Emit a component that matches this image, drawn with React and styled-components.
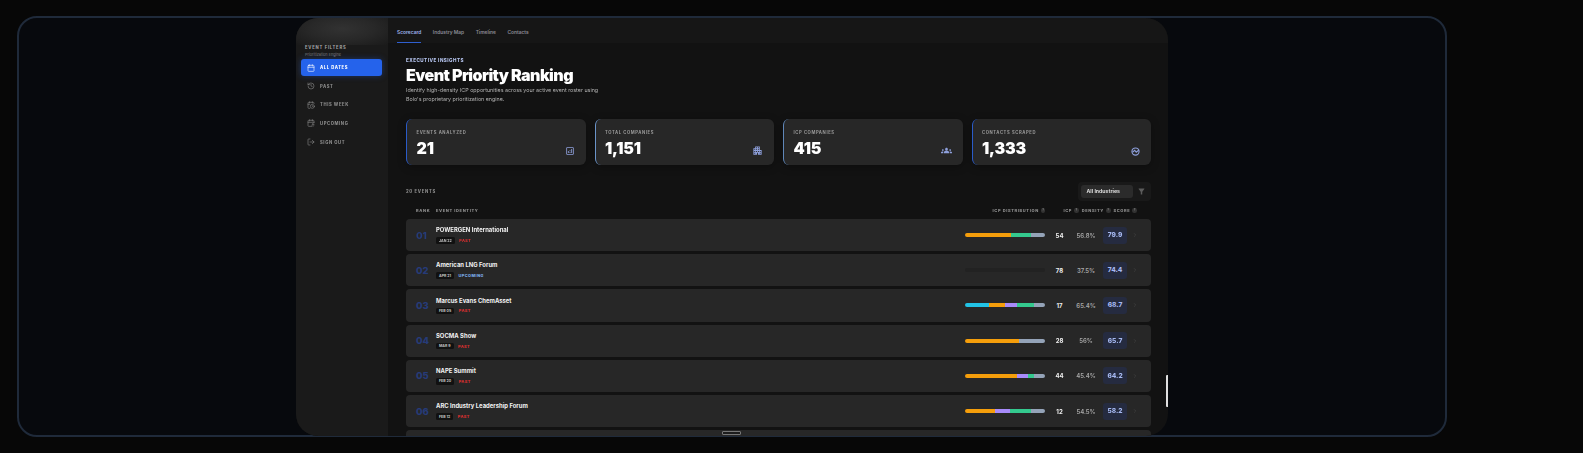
import styled, { createGlobalStyle } from "styled-components";
import {
  Calendar,
  History,
  CalendarClock,
  CalendarArrowUp,
  LogOut,
  ChevronRight,
} from "lucide-react";
import { MdOutlineAnalytics, MdApartment, MdGroups, MdFilterAlt } from "react-icons/md";

const GlobalStyle = createGlobalStyle`
  html, body {
    margin: 0;
    padding: 0;
    background: #070707;
    font-family: "Inter", "Liberation Sans", sans-serif;
  }
  * { box-sizing: border-box; }
`;

const Page = styled.div`
  width: 1583px;
  height: 453px;
  padding: 16px 0 0 17px;
  overflow: hidden;
`;

const Frame = styled.div`
  position: relative;
  width: 1430px;
  height: 421px;
  border: 2px solid #1f2a3a;
  border-radius: 20px;
  background: #07090d;
  display: flex;
  justify-content: center;
`;

const Panel = styled.div`
  width: 872px;
  height: 418px;
  border-radius: 22px;
  overflow: hidden;
  display: flex;
  background: #121212;
  filter: blur(0.4px);
`;

const Sidebar = styled.aside`
  width: 92px;
  flex-shrink: 0;
  background: #1a1a1a;
  display: flex;
  flex-direction: column;
  padding: 0 6px 0 5px;
`;

const SidebarGlow = styled.div`
  height: 27px;
  margin: 0 -6px 0 -5px;
  background: radial-gradient(ellipse at 50% 40%, #323232 0%, #282828 50%, #1a1a1a 100%);
`;

const SidebarHead = styled.div`
  padding-left: 4px;
  margin-bottom: 2px;
`;

const SidebarTitle = styled.div`
  font-size: 4.2px;
  line-height: 5px;
  font-weight: 700;
  letter-spacing: 0.75px;
  color: #a8a8a8;
`;

const SidebarSub = styled.div`
  font-size: 3.8px;
  line-height: 5px;
  margin-top: 2px;
  color: #7d7d7d;
`;

const NavItem = styled.div`
  height: ${(p) => (p.$active ? "17px" : "18.6px")};
  margin-bottom: ${(p) => (p.$active ? "1px" : "0")};
  display: flex;
  align-items: center;
  gap: 5px;
  padding-left: 6px;
  border-radius: 3px;
  background: ${(p) => (p.$active ? "#2563eb" : "transparent")};
  box-shadow: ${(p) => (p.$active ? "0 0 6px rgba(37, 99, 235, 0.35)" : "none")};
  color: ${(p) => (p.$active ? "#ffffff" : "#8a8a8a")};
  font-size: 4.2px;
  font-weight: 800;
  letter-spacing: 0.6px;
`;

const Main = styled.main`
  flex: 1;
  min-width: 0;
  display: flex;
  flex-direction: column;
  position: relative;
`;

const TabBar = styled.nav`
  height: 25px;
  flex-shrink: 0;
  display: flex;
  gap: 11.5px;
  padding-left: 9px;
  background: #161616;
`;

const Tab = styled.div`
  height: 25px;
  padding-top: 10.5px;
  font-size: 4.9px;
  line-height: 7px;
  font-weight: 600;
  color: ${(p) => (p.$active ? "#9fb4ec" : "#8b8b95")};
  border-bottom: 1.2px solid ${(p) => (p.$active ? "#2f5fd0" : "transparent")};
`;

const Content = styled.div`
  flex: 1;
  min-height: 0;
  overflow: hidden;
  padding: 15px 17px 0 18px;
`;

const Eyebrow = styled.div`
  font-size: 4.6px;
  line-height: 6px;
  font-weight: 800;
  letter-spacing: 0.45px;
  color: #b3c2ec;
`;

const Title = styled.h1`
  margin: 2.5px 0 0;
  font-size: 16px;
  line-height: 16px;
  font-weight: 900;
  letter-spacing: -0.55px;
  color: #ffffff;
`;

const Description = styled.p`
  margin: 3.8px 0 0;
  width: 200px;
  font-size: 5.35px;
  line-height: 8.7px;
  color: #b4b4b4;
`;

const Cards = styled.section`
  margin-top: 15.3px;
  display: grid;
  grid-template-columns: repeat(4, 1fr);
  gap: 9px;
`;

const Card = styled.div`
  height: 46px;
  padding: 11px 11px 9px 9.5px;
  display: flex;
  justify-content: space-between;
  align-items: flex-end;
  background: #272727;
  border-radius: 6px;
  border-left: 1.6px solid ${(p) => p.$accent};
  box-shadow: 0 2px 8px rgba(0, 0, 0, 0.3);
`;

const CardBody = styled.div`
  align-self: flex-start;
`;

const CardLabel = styled.div`
  font-size: 4.2px;
  line-height: 6px;
  font-weight: 700;
  letter-spacing: 0.6px;
  color: #9a9a9a;
`;

const CardValue = styled.div`
  margin-top: 2.6px;
  font-size: 16px;
  line-height: 18px;
  font-weight: 900;
  letter-spacing: -0.2px;
  color: #ffffff;
`;

const CardIcon = styled.span`
  display: flex;
  color: #8ea0dc;
`;

const Toolbar = styled.div`
  margin-top: 16.7px;
  display: flex;
  justify-content: space-between;
  align-items: center;
`;

const EventCount = styled.div`
  font-size: 4.2px;
  font-weight: 800;
  letter-spacing: 0.7px;
  color: #8a8a8a;
`;

const FilterBox = styled.div`
  width: 73px;
  height: 19.3px;
  padding: 3px;
  display: flex;
  align-items: center;
  gap: 4.5px;
  background: #191919;
  border-radius: 4px;
`;

const Select = styled.div`
  width: 51.5px;
  height: 13px;
  padding-left: 5.5px;
  display: flex;
  align-items: center;
  font-size: 5.2px;
  font-weight: 700;
  color: #dcdcdc;
  background: #2b2b2b;
  border-radius: 3px;
`;

const FilterIcon = styled.span`
  display: flex;
  color: #5c5c5c;
`;

const TableHead = styled.div`
  margin-top: 4.6px;
  height: 10px;
  display: flex;
  align-items: center;
  padding: 0 14px 0 10px;
  font-size: 4px;
  font-weight: 800;
  letter-spacing: 0.62px;
  color: #8f8f8f;
`;

const RankHead = styled.div`
  width: 20px;
`;

const IdentityHead = styled.div`
  flex: 1;
`;

const HeadCol = styled.div`
  display: flex;
  align-items: center;
  gap: 2px;
  margin-left: ${(p) => p.$gap}px;
`;

const Hint = styled.span`
  width: 4.6px;
  height: 4.6px;
  border-radius: 50%;
  background: #333333;
  color: #7c7c7c;
  font-size: 3px;
  line-height: 4.6px;
  letter-spacing: 0;
  text-align: center;
`;

const Rows = styled.div`
  margin-top: 3.4px;
  display: flex;
  flex-direction: column;
  gap: 3px;
`;

const Row = styled.div`
  height: 32.2px;
  flex-shrink: 0;
  padding: 0 9px 0 10px;
  display: grid;
  grid-template-columns: 20px 1fr 80px 29px 24px 5px 24px 15px;
  align-items: center;
  background: #272727;
  border-radius: 4px;
`;

const Rank = styled.div`
  font-size: 9.5px;
  font-weight: 800;
  color: #263b78;
`;

const Name = styled.div`
  font-size: 5.92px;
  line-height: 8px;
  font-weight: 700;
  color: #f2f2f2;
`;

const Meta = styled.div`
  margin-top: 3px;
  display: flex;
  align-items: center;
  gap: 4.5px;
`;

const DatePill = styled.span`
  height: 6.6px;
  padding: 0 3px;
  display: flex;
  align-items: center;
  font-size: 3.6px;
  font-weight: 700;
  color: #c4c4c4;
  background: #111111;
  border-radius: 1.5px;
`;

const Status = styled.span`
  font-size: 3.8px;
  font-weight: 800;
  letter-spacing: 0.5px;
  color: ${(p) => (p.$upcoming ? "#7fb2f0" : "#dc2f2f")};
`;

const Bar = styled.div`
  height: 4px;
  display: flex;
  overflow: hidden;
  border-radius: 2px;
  background: #222222;
`;

const Segment = styled.div`
  background: ${(p) => p.$color};
`;

const IcpCell = styled.div`
  text-align: center;
  font-size: 6px;
  font-weight: 700;
  color: #eeeeee;
`;

const DensityCell = styled.div`
  text-align: center;
  font-size: 6px;
  font-weight: 600;
  color: #a8a8a8;
`;

const ScoreChip = styled.div`
  grid-column: 7;
  height: 17px;
  display: flex;
  align-items: center;
  justify-content: center;
  font-size: 6.6px;
  font-weight: 800;
  color: #a5b8f0;
  background: #252b40;
  border-radius: 3px;
`;

const Chevron = styled.span`
  display: flex;
  justify-content: center;
  color: #4a4a4a;
`;

const Handle = styled.div`
  position: absolute;
  left: 703px;
  bottom: 0;
  width: 18.5px;
  height: 3.6px;
  background: #1c1c1c;
  border: 0.7px solid #777777;
  border-radius: 1px;
`;

const SideGrip = styled.div`
  position: absolute;
  right: 0;
  top: 357px;
  width: 2px;
  height: 32px;
  background: #e0e0e0;
  border-radius: 1px 0 0 1px;
`;

const navItems = [
  { label: "ALL DATES", Icon: Calendar, active: true },
  { label: "PAST", Icon: History },
  { label: "THIS WEEK", Icon: CalendarClock },
  { label: "UPCOMING", Icon: CalendarArrowUp },
  { label: "SIGN OUT", Icon: LogOut },
];

const ScrapedIcon = () => (
  <svg width="9" height="9" viewBox="0 0 24 24" fill="none" stroke="currentColor" strokeWidth="3">
    <circle cx="12" cy="12" r="9.5" />
    <path d="M4 14 L10 9 L14 14 L21 8" />
  </svg>
);

const stats = [
  { label: "EVENTS ANALYZED", value: "21", accent: "#2a5bc8", icon: <MdOutlineAnalytics size={10} /> },
  { label: "TOTAL COMPANIES", value: "1,151", accent: "#6a93c8", icon: <MdApartment size={11} /> },
  { label: "ICP COMPANIES", value: "415", accent: "#5f86b8", icon: <MdGroups size={11} /> },
  { label: "CONTACTS SCRAPED", value: "1,333", accent: "#2a5bc8", icon: <ScrapedIcon /> },
];

const ORANGE = "#f59e0b";
const GREEN = "#34c98e";
const GREY = "#94a3b8";
const PURPLE = "#a78bfa";
const CYAN = "#22c3e6";

const events = [
  { name: "POWERGEN International", date: "JAN 22", status: "PAST", icp: 54, density: "56.8%", score: "79.9", bar: [[ORANGE, 58], [GREEN, 25], [GREY, 17]] },
  { name: "American LNG Forum", date: "APR 21", status: "UPCOMING", icp: 78, density: "37.5%", score: "74.4", bar: [] },
  { name: "Marcus Evans ChemAsset", date: "FEB 05", status: "PAST", icp: 17, density: "65.4%", score: "68.7", bar: [[CYAN, 30], [ORANGE, 20], [PURPLE, 15], [GREEN, 21], [GREY, 14]] },
  { name: "SOCMA Show", date: "MAR 9", status: "PAST", icp: 28, density: "56%", score: "65.7", bar: [[ORANGE, 67.5], [GREY, 32.5]] },
  { name: "NAPE Summit", date: "FEB 20", status: "PAST", icp: 44, density: "45.4%", score: "64.2", bar: [[ORANGE, 64.5], [PURPLE, 14.5], [GREEN, 7], [GREY, 14]] },
  { name: "ARC Industry Leadership Forum", date: "FEB 12", status: "PAST", icp: 12, density: "54.5%", score: "58.2", bar: [[ORANGE, 37.5], [PURPLE, 19], [GREEN, 25.5], [GREY, 18]] },
];

const App = () => {
  return (
    <>
      <GlobalStyle />
      <Page>
        <Frame>
          <Panel>
            <Sidebar>
              <SidebarGlow />
              <SidebarHead>
                <SidebarTitle>EVENT FILTERS</SidebarTitle>
                <SidebarSub>Prioritization Engine</SidebarSub>
              </SidebarHead>
              {navItems.map(({ label, Icon, active }) => (
                <NavItem key={label} $active={active}>
                  <Icon size={8} strokeWidth={1.8} />
                  {label}
                </NavItem>
              ))}
            </Sidebar>
            <Main>
              <TabBar>
                <Tab $active>Scorecard</Tab>
                <Tab>Industry Map</Tab>
                <Tab>Timeline</Tab>
                <Tab>Contacts</Tab>
              </TabBar>
              <Content>
                <Eyebrow>EXECUTIVE INSIGHTS</Eyebrow>
                <Title>Event Priority Ranking</Title>
                <Description>
                  Identify high-density ICP opportunities across your active event roster using
                  Bolo's proprietary prioritization engine.
                </Description>
                <Cards>
                  {stats.map((stat) => (
                    <Card key={stat.label} $accent={stat.accent}>
                      <CardBody>
                        <CardLabel>{stat.label}</CardLabel>
                        <CardValue>{stat.value}</CardValue>
                      </CardBody>
                      <CardIcon>{stat.icon}</CardIcon>
                    </Card>
                  ))}
                </Cards>
                <Toolbar>
                  <EventCount>20 EVENTS</EventCount>
                  <FilterBox>
                    <Select>All Industries</Select>
                    <FilterIcon>
                      <MdFilterAlt size={9} />
                    </FilterIcon>
                  </FilterBox>
                </Toolbar>
                <TableHead>
                  <RankHead>RANK</RankHead>
                  <IdentityHead>EVENT IDENTITY</IdentityHead>
                  <HeadCol $gap={0}>ICP DISTRIBUTION <Hint>?</Hint></HeadCol>
                  <HeadCol $gap={18}>ICP <Hint>?</Hint></HeadCol>
                  <HeadCol $gap={3}>DENSITY <Hint>?</Hint></HeadCol>
                  <HeadCol $gap={3}>SCORE <Hint>?</Hint></HeadCol>
                </TableHead>
                <Rows>
                  {events.map((event, index) => (
                    <Row key={event.name}>
                      <Rank>{String(index + 1).padStart(2, "0")}</Rank>
                      <div>
                        <Name>{event.name}</Name>
                        <Meta>
                          <DatePill>{event.date}</DatePill>
                          <Status $upcoming={event.status === "UPCOMING"}>{event.status}</Status>
                        </Meta>
                      </div>
                      <Bar>
                        {event.bar.map(([color, pct]) => (
                          <Segment key={color} $color={color} style={{ width: `${pct}%` }} />
                        ))}
                      </Bar>
                      <IcpCell>{event.icp}</IcpCell>
                      <DensityCell>{event.density}</DensityCell>
                      <ScoreChip>{event.score}</ScoreChip>
                      <Chevron>
                        <ChevronRight size={6} />
                      </Chevron>
                    </Row>
                  ))}
                  <Row />
                </Rows>
              </Content>
              <SideGrip />
            </Main>
          </Panel>
          <Handle />
        </Frame>
      </Page>
    </>
  );
};

export default App;
